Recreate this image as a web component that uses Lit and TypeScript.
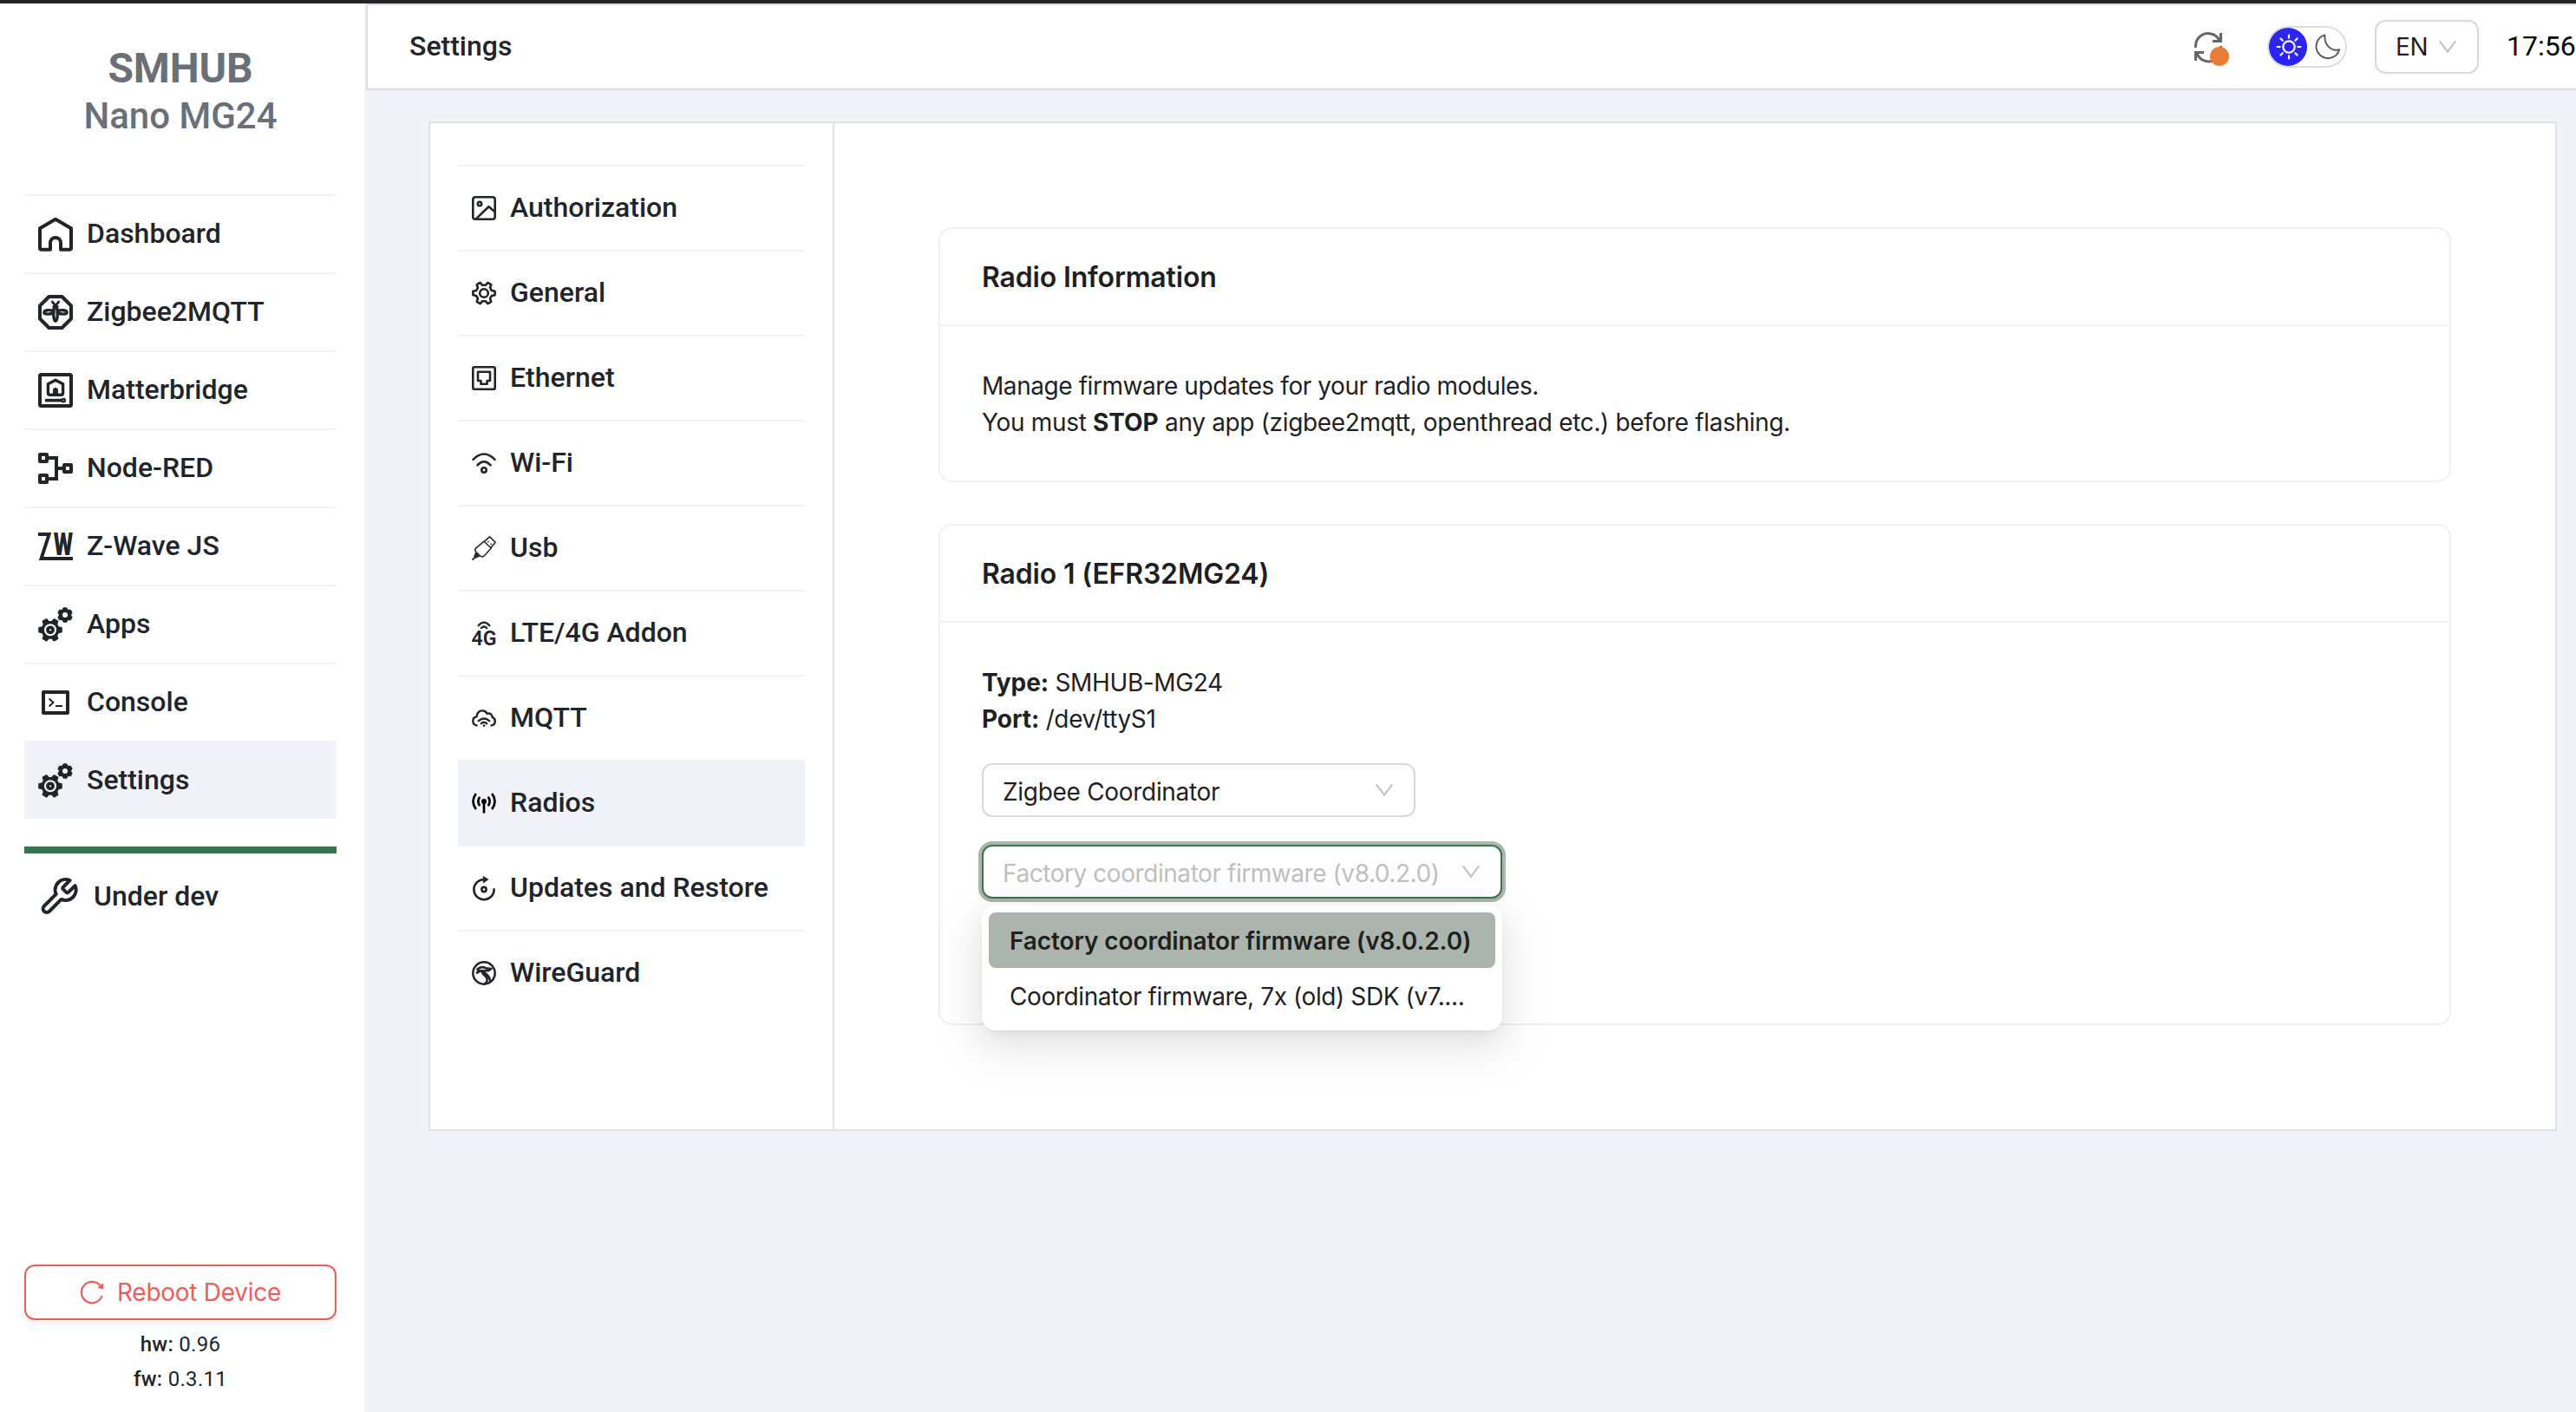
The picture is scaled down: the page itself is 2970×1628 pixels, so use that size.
import { LitElement, html, css, svg, nothing, TemplateResult, SVGTemplateResult } from "lit";
import { customElement, property } from "lit/decorators.js";
import { classMap } from "lit/directives/class-map.js";

interface Icon {
  w: number;
  h: number;
  body: SVGTemplateResult;
}

/** Outline of a cog wheel with flat-topped teeth. */
function gear(cx: number, cy: number, outer: number, inner: number, teeth: number, turn = 0): string {
  const pts: string[] = [];
  const step = (Math.PI * 2) / teeth;
  for (let i = 0; i < teeth; i++) {
    const mid = i * step + turn;
    for (const [offset, radius] of [[-0.31, inner], [-0.17, outer], [0.17, outer], [0.31, inner]]) {
      const a = mid + offset * step;
      pts.push(`${(cx + radius * Math.cos(a)).toFixed(2)} ${(cy + radius * Math.sin(a)).toFixed(2)}`);
    }
  }
  return `M${pts.join("L")}Z`;
}

const cogs: Icon = {
  w: 40, h: 40,
  body: svg`
    <path d=${gear(14, 26.3, 13, 9.6, 6)} fill="currentColor" stroke="currentColor" stroke-width="2" stroke-linejoin="round"/>
    <circle cx="14" cy="26.3" r="7" fill="var(--hole)"/>
    <circle cx="14" cy="26.3" r="3" fill="none" stroke="currentColor" stroke-width="3.8"/>
    <path d=${gear(31, 9, 8, 6.4, 6, Math.PI / 6)} fill="currentColor" stroke="currentColor" stroke-width="2" stroke-linejoin="round"/>
    <circle cx="31" cy="9" r="3" fill="var(--hole)"/>`,
};

const ICONS: Record<string, Icon> = {
  home: {
    w: 40, h: 40,
    body: svg`<path fill="none" stroke="currentColor" stroke-width="4" stroke-linejoin="round" d="M26 30a6 6 0 0 0-12 0V37.8H4a2 2 0 0 1-2-2V13.2L20 2.8 38 13.2V35.8a2 2 0 0 1-2 2H26z"/>`,
  },
  zigbee: {
    w: 40, h: 40,
    body: svg`<g fill="none" stroke="currentColor" stroke-linejoin="round" stroke-linecap="round">
      <path stroke-width="4" d="M12.5 2h15L38 12.5v15L27.5 38h-15L2 27.5v-15z"/>
      <path stroke-width="2.8" d="M16.3 8 20 12.4 23.7 8"/>
      <ellipse cx="20" cy="21.6" rx="2.3" ry="8.8" stroke-width="3.4"/>
      <path stroke-width="3.4" d="M17.6 18.4C13 17 7 17.6 6.9 20.2c0 2.6 7.4 2.4 10.8.3M22.400 18.400c4.600-1.400 10.600-.8 10.700 1.800 0 2.600-7.400 2.400-10.800.3"/>
      <path stroke-width="2.600" d="M17.600 13.600h4.800"/></g>`,
  },
  matter: {
    w: 40, h: 40,
    body: svg`<g fill="none" stroke="currentColor" stroke-linejoin="round">
      <rect x="2" y="2" width="36" height="36" rx="1.5" stroke-width="4"/>
      <path stroke-width="3.4" d="M20 8.200l8.600 4.600v10.500a2 2 0 0 1-2 2H13.400a2 2 0 0 1-2-2V12.800z"/>
      <path stroke-width="3.6" d="M8 31.600h20"/><circle cx="29.200" cy="31.600" r="1.800" stroke-width="2.200"/></g>
      <path fill="currentColor" d="M17 26v-6a3 3 0 0 1 6 0v6z"/>`,
  },
  nodered: {
    w: 40, h: 36,
    body: svg`<g fill="none" stroke="currentColor" stroke-width="4" stroke-linejoin="round">
      <rect x="2" y="2" width="8" height="8"/><rect x="2" y="26" width="8" height="8"/><rect x="30" y="14" width="8" height="8"/></g>
      <path fill="none" stroke="currentColor" stroke-width="4" d="M11 6h10v24H11M21 18h8"/>`,
  },
  zwave: {
    w: 40, h: 32,
    body: svg`<path fill="none" stroke="currentColor" stroke-width="4" d="M0 2h12.600L3.600 30H40"/>
      <text x="17.800" y="26" font-family="Roboto, sans-serif" font-weight="900" font-size="36" textLength="22.400" lengthAdjust="spacingAndGlyphs" fill="currentColor">W</text>`,
  },
  cogs,
  console: {
    w: 40, h: 28,
    body: svg`<rect x="6" y="2" width="28" height="24" fill="none" stroke="currentColor" stroke-width="4" stroke-linejoin="round"/>
      <path fill="none" stroke="currentColor" stroke-width="2" d="M12.600 9.500l4.800 4.500-4.800 4.500M20 18h8"/>`,
  },
  image: {
    w: 28, h: 28,
    body: svg`<g fill="none" stroke="currentColor" stroke-width="2.600" stroke-linejoin="round">
      <rect x="1.300" y="1.300" width="25.400" height="25.400" rx="2.800"/><circle cx="9" cy="9" r="2.200"/>
      <path d="M4.800 26.400L19.500 12.200l7 6"/></g>`,
  },
  gear: {
    w: 28, h: 28,
    body: svg`<g fill="none" stroke="currentColor" stroke-width="2.600" stroke-linejoin="round">
      <path d=${gear(14, 14, 12.8, 9.4, 6)}/><circle cx="14" cy="14" r="4.800"/></g>`,
  },
  ethernet: {
    w: 28, h: 28,
    body: svg`<g fill="none" stroke="currentColor" stroke-width="2.600">
      <rect x="1.300" y="1.300" width="25.400" height="25.400" rx="1.500"/>
      <path stroke-linejoin="round" d="M7 6.800h14V17h-3.400v3.800h-7.200V17H7z"/></g>`,
  },
  wifi: {
    w: 28, h: 24,
    body: svg`<g fill="none" stroke="currentColor" stroke-width="2.600" stroke-linecap="round">
      <path d="M1.500 7.800Q14-4.800 26.500 7.800M6.400 14.300q7.600-8 15.200 0"/><circle cx="14" cy="20" r="2.700"/></g>`,
  },
  usb: {
    w: 28, h: 28,
    body: svg`<g fill="none" stroke="currentColor" stroke-width="1.500" stroke-linejoin="round" stroke-linecap="round">
      <path d="M14 6.200L22.300 14 14.600 22.500Q12.500 25 10 23.200L4.800 18.300Q2.800 16 4.800 13.800zM15.200 5.600L20.500.9l6.700 6.300-5 6"/>
      <path stroke-width="1.800" d="M1 27.200L4.600 23.500"/></g>
      <path fill="currentColor" d="M4.200 18.600l5.200 5-5 2.200-2.200-2.400z"/>
      <circle cx="18.800" cy="6.600" r=".9" fill="currentColor"/><circle cx="22.200" cy="9.400" r=".9" fill="currentColor"/>`,
  },
  lte: {
    w: 28, h: 28,
    body: svg`<path fill="none" stroke="currentColor" stroke-width="2.300" stroke-linecap="round" d="M7.600 5.200q6.400-7.200 12.800 0M10.800 8.200q3.200-3.400 6.400 0"/>
      <text x="-.4" y="27.700" font-family="Roboto, sans-serif" font-weight="600" font-size="23.500" textLength="29" lengthAdjust="spacingAndGlyphs" fill="currentColor">4G</text>`,
  },
  cloud: {
    w: 28, h: 20,
    body: svg`<g fill="none" stroke="currentColor" stroke-width="2.400" stroke-linecap="round" stroke-linejoin="round">
      <path d="M5.600 18.400C2.700 17.800 1.300 15.600 1.300 13.200 1.300 10.400 3.200 8.600 5.600 8.200 6 4.200 8.500 1.400 12.300 1.400 15 1.400 16.600 2.800 17.400 4.800 21 3.600 23.400 5.800 23.600 8.800 26 9.800 26.800 11.600 26.800 13.400 26.800 16 25.200 18 22.400 18.400"/>
      <path d="M7.800 13.200q6.200-5.600 12.400 0M10.800 16.200q3.200-2.800 6.400 0"/></g>
      <circle cx="14" cy="18.600" r="1.300" fill="currentColor"/>`,
  },
  radio: {
    w: 28, h: 24,
    body: svg`<g fill="none" stroke="#000" stroke-width="2.700">
      <path d="M14 10v13.500M4.800 1q-6.600 9 0 18M23.200 1q6.600 9 0 18M9.200 4.800q-3.600 5.200 0 10.400M18.800 4.800q3.600 5.200 0 10.400"/></g>
      <circle cx="14" cy="10" r="3" fill="#000"/>`,
  },
  restore: {
    w: 28, h: 28,
    body: svg`<g fill="none" stroke="currentColor" stroke-width="2.600" stroke-linecap="round">
      <path d="M14 4A11.600 11.600 0 1 0 25.600 15.400"/><circle cx="14" cy="15.500" r="2.600"/></g>
      <path fill="currentColor" stroke="currentColor" stroke-linejoin="round" d="M13.300.6L18.800 4l-5.500 3.800z"/>`,
  },
  wireguard: {
    w: 28, h: 28,
    body: svg`<g fill="none" stroke="currentColor" stroke-width="2.500" stroke-linecap="round" stroke-linejoin="round">
      <circle cx="14" cy="14" r="12.700"/>
      <path stroke-width="2.600" d="M6.500 9.400Q11 5.600 16 8.200l6.500.8-3.700 2.300q-4.600-.6-4.800 1.200c.4 2.300 7 3.200 7 11.200M5.800 13.600q4.400-3 6.400-1.300c-1 3.600 5.800 4.600 5.400 9.700q0 2.400-2 3.600M7 11.400h6"/></g>`,
  },
  wrench: {
    w: 44, h: 44,
    body: svg`<g transform="scale(2) translate(-1.2 -1)"><path fill="none" stroke="currentColor" stroke-width="2" stroke-linecap="round" stroke-linejoin="round" d="M14.700 6.300a1 1 0 0 0 0 1.400l1.600 1.600a1 1 0 0 0 1.400 0l3.770-3.770a6 6 0 0 1-7.940 7.940l-6.910 6.910a2.120 2.120 0 0 1-3-3l6.910-6.910a6 6 0 0 1 7.940-7.940l-3.760 3.760z"/></g>`,
  },
  sync: {
    w: 32, h: 32,
    body: svg`<path fill="none" stroke="currentColor" stroke-width="3" d="M1.600 17A14.400 14.400 0 0 1 29.400 10M30.500 0v9.600H21M30.400 15A14.400 14.400 0 0 1 2.600 22.500M1.500 32V22.400H11"/>`,
  },
  sun: {
    w: 30, h: 30,
    body: svg`<g fill="none" stroke="#fff" stroke-width="2.200" stroke-linecap="round"><circle cx="15" cy="15" r="6.700"/>
      <path d="M15 1.600v3M15 25.400v3M1.600 15h3M25.400 15h3M5.500 5.500l2.200 2.200M22.300 22.300l2.200 2.200M5.500 24.500l2.200-2.200M22.300 7.700l2.200-2.200"/></g>`,
  },
  moon: {
    w: 30, h: 30,
    body: svg`<path fill="none" stroke="#5c5c5c" stroke-width="2" stroke-linejoin="round" d="M11.400 1.400A13.600 13.600 0 1 0 28.200 18.300C18 20.500 10.500 12.500 11.400 1.400z"/>`,
  },
  reload: {
    w: 28, h: 28,
    body: svg`<path fill="none" stroke="currentColor" stroke-width="2.200" d="M25.700 18A12.200 12.200 0 1 1 23.600 6.400"/>
      <path fill="currentColor" d="M27.200 3.400v7.200l-6.800-1.900z"/>`,
  },
  chevron: {
    w: 20, h: 14,
    body: svg`<path fill="none" stroke="#bfbfbf" stroke-width="2" d="M.8.400L10 12.600 19.200.4"/>`,
  },
};

function icon(name: string): TemplateResult {
  const i = ICONS[name];
  return html`<svg class="icon" width=${i.w} height=${i.h} viewBox="0 0 ${i.w} ${i.h}" aria-hidden="true">${i.body}</svg>`;
}

interface Entry {
  label: string;
  icon: string;
}

@customElement("nav-list")
class NavList extends LitElement {
  @property({ attribute: false }) items: Entry[] = [];
  @property() active = "";
  @property({ type: Boolean, reflect: true }) compact = false;

  static styles = css`
    :host { display: flex; flex-direction: column; --row: 90px; }
    :host([compact]) { --row: 98px; }
    .item {
      display: flex; align-items: center; gap: 16px; box-sizing: border-box;
      height: var(--row); padding: 0 16px; border-top: 2px solid #f2f3f8;
      font: 500 32px/40px Roboto, sans-serif; color: #212529; --hole: #fff;
    }
    .item.active { background: #f2f3f8; --hole: #f2f3f8; }
    .icon { display: block; flex: none; overflow: visible; }
    .label { padding-bottom: 2px; white-space: nowrap; }
  `;

  render() {
    return this.items.map(
      (e) => html`<div class=${classMap({ item: true, active: e.label === this.active })}>
        ${icon(e.icon)}<span class="label">${e.label}</span>
      </div>`,
    );
  }
}

@customElement("select-box")
class SelectBox extends LitElement {
  @property() value = "";
  @property({ attribute: false }) options: string[] = [];
  @property({ type: Boolean, reflect: true }) open = false;
  @property({ type: Boolean, reflect: true }) short = false;

  static styles = css`
    :host { display: block; position: relative; font: 400 28px/42px Inter, sans-serif; color: #1f1f1f; letter-spacing: -0.3px; }
    .box {
      display: flex; align-items: center; justify-content: space-between; box-sizing: border-box;
      height: 62px; padding: 0 24px 0 22px; border: 2px solid #d9d9d9; border-radius: 12px; background: #fff;
      white-space: nowrap;
    }
    .value { padding-top: 3px; }
    :host([short]) .value { padding: 0 0 1px; }
    .icon { display: block; flex: none; }
    :host([open]) .box { border-color: #3a754c; box-shadow: 0 0 0 4px #acb5ad; color: #bfbfbf; letter-spacing: -0.44px; }
    .menu {
      position: absolute; z-index: 2; top: calc(100% + 8px); left: 0; right: 0; padding: 8px;
      border-radius: 16px; background: #fff;
      box-shadow: 0 12px 32px rgba(0, 0, 0, 0.08), 0 6px 12px -8px rgba(0, 0, 0, 0.12), 0 18px 56px 16px rgba(0, 0, 0, 0.05);
    }
    .option { padding: 12px 24px 10px; border-radius: 8px; white-space: nowrap; letter-spacing: -0.4px; }
    .option.selected { background: #acb5ad; font-weight: 600; letter-spacing: -0.09px; }
  `;

  render() {
    return html`
      <div class="box"><span class="value">${this.value}</span>${icon("chevron")}</div>
      ${this.open
        ? html`<div class="menu">
            ${this.options.map((o) => html`<div class=${classMap({ option: true, selected: o === this.value })}>${o}</div>`)}
          </div>`
        : nothing}
    `;
  }
}

@customElement("app-root")
class AppRoot extends LitElement {
  private mainNav: Entry[] = [
    { label: "Dashboard", icon: "home" },
    { label: "Zigbee2MQTT", icon: "zigbee" },
    { label: "Matterbridge", icon: "matter" },
    { label: "Node-RED", icon: "nodered" },
    { label: "Z-Wave JS", icon: "zwave" },
    { label: "Apps", icon: "cogs" },
    { label: "Console", icon: "console" },
    { label: "Settings", icon: "cogs" },
  ];

  private settingsNav: Entry[] = [
    { label: "Authorization", icon: "image" },
    { label: "General", icon: "gear" },
    { label: "Ethernet", icon: "ethernet" },
    { label: "Wi-Fi", icon: "wifi" },
    { label: "Usb", icon: "usb" },
    { label: "LTE/4G Addon", icon: "lte" },
    { label: "MQTT", icon: "cloud" },
    { label: "Radios", icon: "radio" },
    { label: "Updates and Restore", icon: "restore" },
    { label: "WireGuard", icon: "wireguard" },
  ];

  private firmwares = ["Factory coordinator firmware (v8.0.2.0)", "Coordinator firmware, 7x (old) SDK (v7...."];

  static styles = css`
    :host {
      display: flex; box-sizing: border-box; height: 1628px; overflow: hidden;
      border-top: 4px solid #212529; background: #f2f3f8; font-family: Roboto, sans-serif; color: #212529;
    }
    .icon { display: block; flex: none; overflow: visible; }

    .sidebar {
      display: flex; flex-direction: column; flex: none; box-sizing: border-box;
      width: 420px; padding: 46px 32px 18px 28px; background: #fff;
    }
    .brand { display: flex; flex-direction: column; align-items: center; height: 174px; color: #6b7077; }
    .brand-name { font: 700 48px/57px Roboto, sans-serif; letter-spacing: -0.1px; }
    .brand-model { font: 500 42px/54px Roboto, sans-serif; }
    .rule { height: 8px; margin-top: 32px; background: #3a764d; }
    .dev {
      display: flex; align-items: center; gap: 18px; box-sizing: border-box; height: 98px; padding-left: 18px;
      border-top: 2px solid #f2f3f8; font: 500 32px/40px Roboto, sans-serif;
    }
    .dev-label { padding-bottom: 2px; }
    .foot { display: flex; flex-direction: column; margin-top: auto; }
    .reboot {
      display: flex; align-items: center; justify-content: center; gap: 15px; box-sizing: border-box;
      height: 64px; margin-bottom: 8px; border: 2px solid #ee5d58; border-radius: 12px; background: #fff;
      box-shadow: 0 4px 0 #fff2f0; color: #ee5d58; font: 400 28px/42px Inter, sans-serif; letter-spacing: -0.27px;
    }
    .version { text-align: center; font: 400 24px/40px Roboto, sans-serif; letter-spacing: 0.3px; }
    .version b { font-weight: 500; }

    .page { display: flex; flex-direction: column; flex: 1; min-width: 0; padding-left: 2px; }
    .header {
      display: flex; align-items: center; box-sizing: border-box; height: 100px; padding-left: 48px;
      border: 2px solid #dfdfe0; border-right: 0; background: #fff;
    }
    .title { margin-right: auto; padding-bottom: 2px; font: 500 32px/40px Roboto, sans-serif; }
    .sync { position: relative; margin-right: 52px; color: #666; }
    .badge { position: absolute; left: 18px; top: 16px; width: 22px; height: 22px; border-radius: 50%; background: #e97c35; }
    .theme {
      display: flex; align-items: center; box-sizing: border-box; width: 92px; height: 48px; margin-right: 32px;
      border: 2px solid #dedee0; border-radius: 24px;
    }
    .light {
      display: flex; align-items: center; justify-content: center; box-sizing: border-box;
      width: 44px; height: 44px; padding-left: 2px; border-radius: 50%; background: #2b24f5;
    }
    .dark { margin-left: 9px; }
    .lang { width: 120px; margin-right: 32px; }
    .clock { width: 80px; font-size: 32px; line-height: 40px; padding-bottom: 2px; color: #000; white-space: nowrap; }

    .panel { display: flex; box-sizing: border-box; height: 1164px; margin: 36px 22px 0 72px; border: 2px solid #dee1e6; background: #fff; }
    .tabs { flex: none; box-sizing: border-box; width: 466px; padding: 48px 32px 0; border-right: 2px solid #dee1e6; }
    .content { display: flex; flex-direction: column; gap: 48px; flex: 1; padding: 120px; }
    .card { box-sizing: border-box; border: 2px solid #f0f0f0; border-radius: 16px; font: 400 28px/42px Inter, sans-serif; color: #1f1f1f; }
    .card-title {
      display: flex; align-items: center; box-sizing: border-box; height: 112px; padding: 1px 48px 0;
      border-bottom: 2px solid #f0f0f0; font: 600 32px/48px Inter, sans-serif; letter-spacing: -0.17px;
    }
    .info { height: 294px; }
    .radio { height: 578px; }
    .card-body { display: flex; flex-direction: column; padding: 48px 48px 0; }
    .lead { letter-spacing: -0.43px; }
    .note { letter-spacing: -0.33px; }
    .fact { letter-spacing: -0.37px; }
    .note b, .fact b { font-weight: 700; letter-spacing: -0.1px; }
    .mode { width: 500px; margin-top: 30px; }
    .firmware { width: 600px; margin-top: 32px; }
  `;

  render() {
    return html`
      <aside class="sidebar">
        <div class="brand">
          <div class="brand-name">SMHUB</div>
          <div class="brand-model">Nano MG24</div>
        </div>
        <nav-list .items=${this.mainNav} active="Settings"></nav-list>
        <div class="rule"></div>
        <div class="dev">${icon("wrench")}<span class="dev-label">Under dev</span></div>
        <div class="foot">
          <div class="reboot">${icon("reload")}<span>Reboot Device</span></div>
          <div class="version"><b>hw:</b> 0.96</div>
          <div class="version"><b>fw:</b> 0.3.11</div>
        </div>
      </aside>
      <main class="page">
        <header class="header">
          <div class="title">Settings</div>
          <div class="sync">${icon("sync")}<span class="badge"></span></div>
          <div class="theme">
            <span class="light">${icon("sun")}</span>
            <span class="dark">${icon("moon")}</span>
          </div>
          <select-box class="lang" short value="EN"></select-box>
          <div class="clock">17:56</div>
        </header>
        <section class="panel">
          <div class="tabs"><nav-list compact .items=${this.settingsNav} active="Radios"></nav-list></div>
          <div class="content">
            <article class="card info">
              <div class="card-title">Radio Information</div>
              <div class="card-body">
                <div class="lead">Manage firmware updates for your radio modules.</div>
                <div class="note">You must <b>STOP</b> any app (zigbee2mqtt, openthread etc.) before flashing.</div>
              </div>
            </article>
            <article class="card radio">
              <div class="card-title">Radio 1 (EFR32MG24)</div>
              <div class="card-body">
                <div class="fact"><b>Type:</b> SMHUB-MG24</div>
                <div class="fact"><b>Port:</b> /dev/ttyS1</div>
                <select-box class="mode" value="Zigbee Coordinator"></select-box>
                <select-box class="firmware" open .value=${this.firmwares[0]} .options=${this.firmwares}></select-box>
              </div>
            </article>
          </div>
        </section>
      </main>
    `;
  }
}
